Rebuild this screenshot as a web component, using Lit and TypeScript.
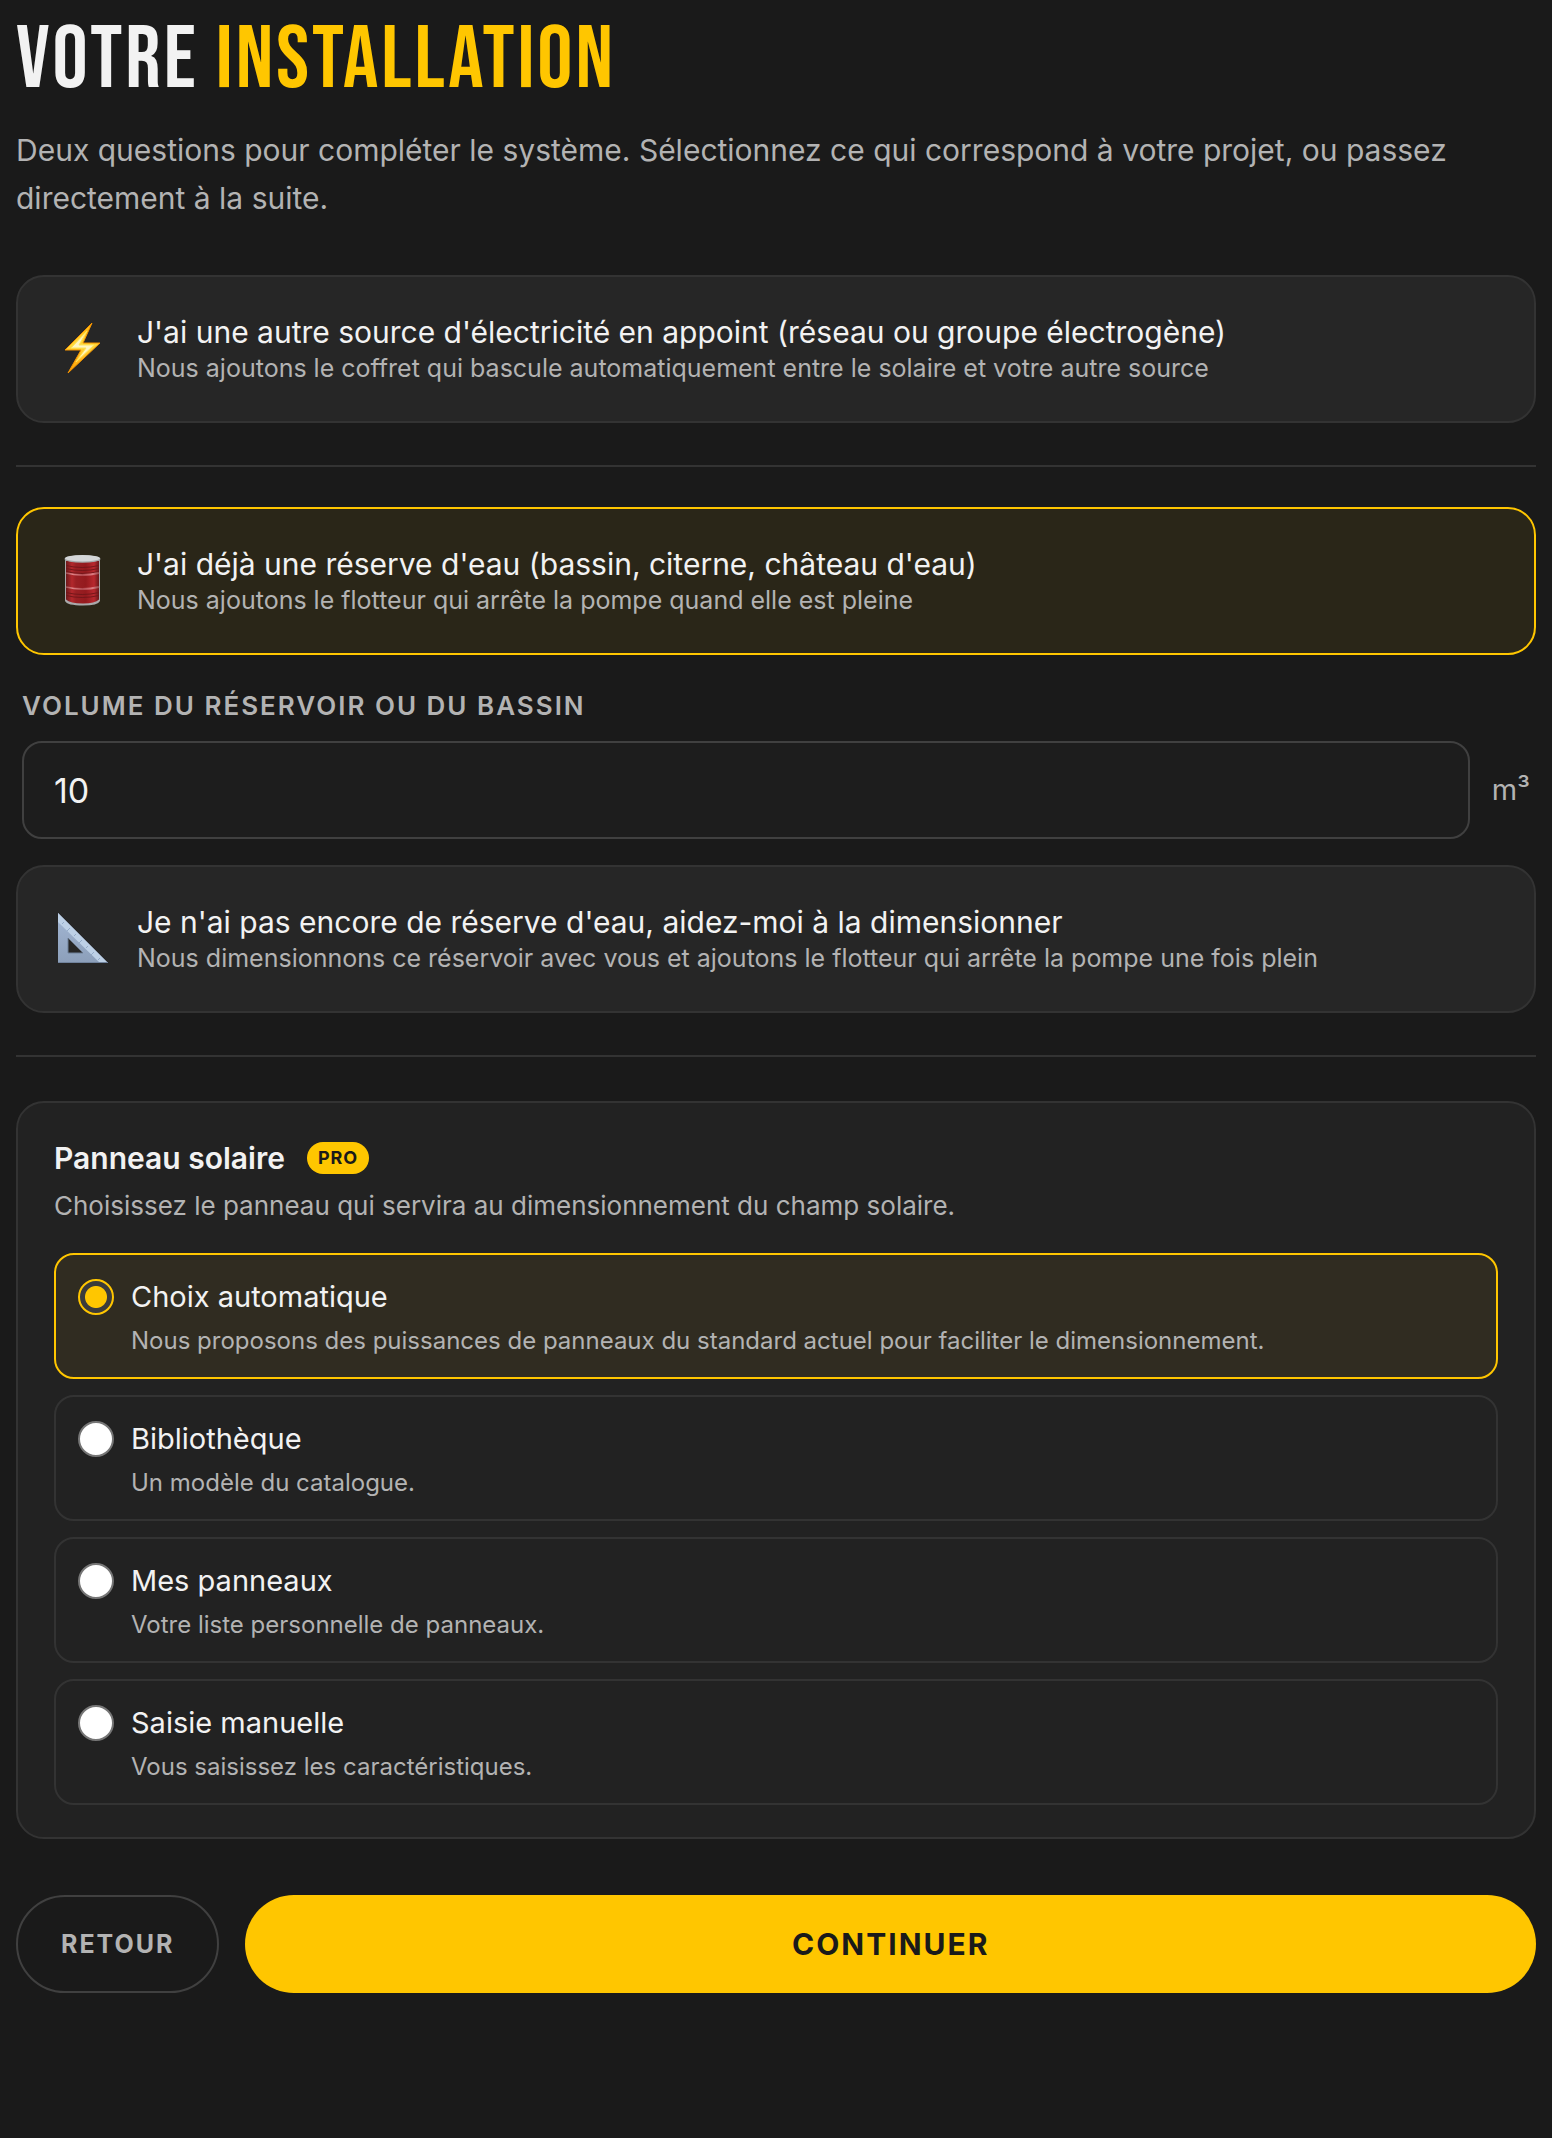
import { LitElement, html, css, svg } from "lit";
import { customElement, state } from "lit/decorators.js";
import { classMap } from "lit/directives/class-map.js";

const bolt = svg`
  <defs>
    <linearGradient id="bolt-fill" x1="0" y1="0" x2="0" y2="1">
      <stop offset="0" stop-color="#ffb60a" />
      <stop offset="0.45" stop-color="#ffd83a" />
      <stop offset="1" stop-color="#ff9d00" />
    </linearGradient>
  </defs>
  <path d="M36 0 L9 27 H25 L12 50 L44 20 H27 Z" fill="url(#bolt-fill)" stroke="#f59300" stroke-width="1" stroke-linejoin="round" />
  <path d="M31 8 L15 25 H30 L20 39 L38 22 H23 Z" fill="#fff6c0" stroke="#ffe45c" stroke-width="1" />
`;

const barrel = svg`
  <defs>
    <linearGradient id="barrel-body" x1="0" y1="0" x2="1" y2="0">
      <stop offset="0" stop-color="#6e1a1c" />
      <stop offset="0.18" stop-color="#b3282c" />
      <stop offset="0.3" stop-color="#9a2024" />
      <stop offset="0.6" stop-color="#941a1e" />
      <stop offset="0.85" stop-color="#b8282e" />
      <stop offset="1" stop-color="#6a1719" />
    </linearGradient>
    <linearGradient id="barrel-rim" x1="0" y1="0" x2="1" y2="0">
      <stop offset="0" stop-color="#9a4a4e" />
      <stop offset="0.2" stop-color="#e08488" />
      <stop offset="0.5" stop-color="#b04a50" />
      <stop offset="0.8" stop-color="#de7c82" />
      <stop offset="1" stop-color="#94464a" />
    </linearGradient>
  </defs>
  <path d="M9 4 V46 Q11 50.500 27 50.500 Q42 50.500 44 46 V4 Z" fill="#a9a9ab" />
  <path d="M10 6 V44.500 Q14 48.500 27 48.500 Q39 48.500 43 44.500 V6 Z" fill="url(#barrel-body)" />
  <g fill="none" stroke="#6f1518" stroke-width="0.900">
    <path d="M10 10.500 Q26 14.500 43 10.500" />
    <path d="M10 13.500 Q26 17.500 43 13.500" />
    <path d="M10 16.500 Q26 20.500 43 16.500" />
    <path d="M10 37.500 Q26 41.500 43 37.500" />
    <path d="M10 40.500 Q26 44.500 43 40.500" />
  </g>
  <g fill="none" stroke="url(#barrel-rim)" stroke-width="1.800">
    <path d="M10 18 Q26 22 43 18" />
    <path d="M10 32 Q26 36 43 32" />
  </g>
  <ellipse cx="26.500" cy="4" rx="18" ry="3.800" fill="#a4a6a8" />
  <ellipse cx="26.500" cy="3.200" rx="17.500" ry="3.200" fill="#d4d6d8" />
`;

const setSquare = svg`
  <defs>
    <linearGradient id="square-body" x1="0" y1="0" x2="0" y2="1">
      <stop offset="0" stop-color="#a3b7d4" />
      <stop offset="1" stop-color="#8c9fba" />
    </linearGradient>
  </defs>
  <path fill-rule="evenodd" d="M2 0 L52 50 H2 Z M12 25 V40 H27 Z" fill="url(#square-body)" />
  <path d="M2 0 L52 50 H44 L2 9 Z" fill="#bdd0e6" />
  <path d="M12 25 V40 H27" fill="none" stroke="#6f819a" stroke-width="1" />
  <path d="M2 49.500 H52" stroke="#71839d" stroke-width="1" />
  <path d="M8 9 l-2 2 M14 15 l-3 3 M20 21 l-2 2 M26 27 l-3 3 M32 33 l-2 2 M38 39 l-3 3 M44 45 l-2 2" stroke="#8fa6c3" stroke-width="0.900" />
`;

const panelOptions = [
  { id: "auto", title: "Choix automatique", text: "Nous proposons des puissances de panneaux du standard actuel pour faciliter le dimensionnement." },
  { id: "library", title: "Bibliothèque", text: "Un modèle du catalogue." },
  { id: "mine", title: "Mes panneaux", text: "Votre liste personnelle de panneaux." },
  { id: "manual", title: "Saisie manuelle", text: "Vous saisissez les caractéristiques." },
];

@customElement("app-root")
export class AppRoot extends LitElement {
  @state() private backup = false;
  @state() private reserve: "have" | "size" = "have";
  @state() private panel = "auto";

  static styles = css`
    :host {
      display: block;
      min-height: 100vh;
      box-sizing: border-box;
      padding: 16px;
      background: #1a1a1a;
      color: #f2f2f2;
      font-family: Inter, "Liberation Sans", sans-serif;
    }
    * {
      box-sizing: border-box;
    }
    h1,
    h2,
    p {
      margin: 0;
    }
    button,
    input {
      font-family: inherit;
    }
    h1 {
      font-family: "Bebas Neue", "Liberation Sans Narrow", sans-serif;
      font-size: 88px;
      line-height: 90px;
      font-weight: 400;
      letter-spacing: 3px;
      text-transform: uppercase;
    }
    .accent {
      color: #ffc600;
    }
    .intro {
      margin-top: 20px;
      font-size: 30px;
      line-height: 48px;
      color: #b3b3b3;
    }
    .group {
      display: flex;
      flex-direction: column;
    }
    .group.first {
      margin-top: 53px;
    }
    .divider {
      height: 2px;
      margin: 42px 0 40px;
      border: 0;
      background: #333333;
    }
    .card {
      display: flex;
      align-items: center;
      gap: 29px;
      width: 100%;
      padding: 36px 38px;
      border: 2px solid #333333;
      border-radius: 28px;
      background: #262626;
      color: inherit;
      text-align: left;
      cursor: pointer;
    }
    .card.selected {
      border-color: #ffc600;
      background: #2a2618;
    }
    .icon {
      flex: none;
      width: 52px;
      height: 52px;
    }
    .copy {
      display: flex;
      flex-direction: column;
    }
    .card-title {
      font-size: 30px;
      line-height: 38px;
    }
    .card-text {
      font-size: 25px;
      line-height: 34px;
      color: #b3b3b3;
    }
    .volume {
      display: flex;
      flex-direction: column;
      padding: 32px 6px 26px;
    }
    .volume label {
      font-size: 26px;
      line-height: 38px;
      font-weight: 600;
      letter-spacing: 2px;
      text-transform: uppercase;
      color: #b3b3b3;
    }
    .field {
      display: flex;
      align-items: center;
      gap: 22px;
      margin-top: 16px;
    }
    .field input {
      flex: 1;
      min-width: 0;
      height: 98px;
      padding: 0 30px;
      border: 2px solid #404040;
      border-radius: 20px;
      background: #1d1d1d;
      color: #f2f2f2;
      font-size: 34px;
    }
    .unit {
      font-size: 29px;
      line-height: 48px;
      color: #b3b3b3;
    }
    .panel {
      margin-top: 44px;
      padding: 33px 36px 32px;
      border: 2px solid #333333;
      border-radius: 28px;
      background: #222222;
    }
    .panel-head {
      display: flex;
      align-items: center;
      gap: 22px;
    }
    h2 {
      font-size: 30px;
      line-height: 44px;
      font-weight: 600;
    }
    .badge {
      padding: 0 11px;
      border-radius: 16px;
      background: #ffc600;
      color: #1a1a1a;
      font-size: 18px;
      line-height: 32px;
      font-weight: 700;
      letter-spacing: 1px;
    }
    .panel-text {
      margin-top: 5px;
      font-size: 26px;
      line-height: 42px;
      color: #b3b3b3;
    }
    .options {
      display: grid;
      gap: 16px;
      margin: 26px 0 0;
      padding: 0;
      border: 0;
      min-width: 0;
    }
    .option {
      display: flex;
      align-items: flex-start;
      gap: 17px;
      padding: 18px 22px 17px;
      border: 2px solid #333333;
      border-radius: 20px;
      cursor: pointer;
    }
    .option.selected {
      border-color: #ffc600;
      background: #302c21;
    }
    .option input {
      appearance: none;
      flex: none;
      width: 36px;
      height: 36px;
      margin: 6px 0 0;
      border: 2px solid #767676;
      border-radius: 50%;
      background: #ffffff;
    }
    .option input:checked {
      border-color: #ffc600;
      background: radial-gradient(circle, #ffc600 10.5px, #3b3b3b 11.5px);
    }
    .option-title {
      font-size: 29px;
      line-height: 48px;
    }
    .option-text {
      font-size: 24px;
      line-height: 39px;
      color: #b3b3b3;
    }
    .actions {
      display: flex;
      gap: 26px;
      margin-top: 56px;
    }
    .actions button {
      height: 98px;
      border-radius: 49px;
      font-weight: 700;
      text-transform: uppercase;
      cursor: pointer;
    }
    .back {
      padding: 0 43px;
      border: 2px solid #404040;
      background: transparent;
      color: #b3b3b3;
      font-size: 25px;
      letter-spacing: 2px;
    }
    .next {
      flex: 1;
      border: 0;
      background: #ffc600;
      color: #1a1a1a;
      font-size: 30px;
      letter-spacing: 2px;
    }
  `;

  private card(icon: unknown, title: string, text: string, selected: boolean, pick: () => void) {
    return html`
      <button type="button" class=${classMap({ card: true, selected })} aria-pressed=${selected} @click=${pick}>
        <svg class="icon" viewBox="0 0 52 52" aria-hidden="true">${icon}</svg>
        <span class="copy">
          <span class="card-title">${title}</span>
          <span class="card-text">${text}</span>
        </span>
      </button>
    `;
  }

  render() {
    return html`
      <main>
        <h1>Votre <span class="accent">installation</span></h1>
        <p class="intro">
          Deux questions pour compléter le système. Sélectionnez ce qui correspond à votre projet, ou passez directement
          à la suite.
        </p>

        <div class="group first">
          ${this.card(
            bolt,
            "J'ai une autre source d'électricité en appoint (réseau ou groupe électrogène)",
            "Nous ajoutons le coffret qui bascule automatiquement entre le solaire et votre autre source",
            this.backup,
            () => (this.backup = !this.backup),
          )}
        </div>

        <hr class="divider" />

        <div class="group">
          ${this.card(
            barrel,
            "J'ai déjà une réserve d'eau (bassin, citerne, château d'eau)",
            "Nous ajoutons le flotteur qui arrête la pompe quand elle est pleine",
            this.reserve === "have",
            () => (this.reserve = "have"),
          )}
          <div class="volume">
            <label for="volume">Volume du réservoir ou du bassin</label>
            <div class="field">
              <input id="volume" type="text" inputmode="decimal" value="10" />
              <span class="unit">m³</span>
            </div>
          </div>
          ${this.card(
            setSquare,
            "Je n'ai pas encore de réserve d'eau, aidez-moi à la dimensionner",
            "Nous dimensionnons ce réservoir avec vous et ajoutons le flotteur qui arrête la pompe une fois plein",
            this.reserve === "size",
            () => (this.reserve = "size"),
          )}
        </div>

        <hr class="divider" />

        <section class="panel">
          <div class="panel-head">
            <h2 id="panel-title">Panneau solaire</h2>
            <span class="badge">PRO</span>
          </div>
          <p class="panel-text">Choisissez le panneau qui servira au dimensionnement du champ solaire.</p>
          <fieldset class="options" aria-labelledby="panel-title">
            ${panelOptions.map(
              (option) => html`
                <label class=${classMap({ option: true, selected: this.panel === option.id })}>
                  <input
                    type="radio"
                    name="panel"
                    value=${option.id}
                    .checked=${this.panel === option.id}
                    @change=${() => (this.panel = option.id)}
                  />
                  <span class="copy">
                    <span class="option-title">${option.title}</span>
                    <span class="option-text">${option.text}</span>
                  </span>
                </label>
              `,
            )}
          </fieldset>
        </section>

        <div class="actions">
          <button type="button" class="back">Retour</button>
          <button type="button" class="next">Continuer</button>
        </div>
      </main>
    `;
  }
}
